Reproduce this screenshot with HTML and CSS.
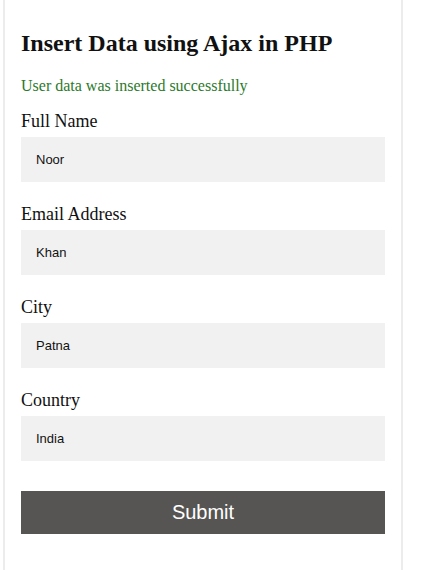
FILE: index.html
```html
<!DOCTYPE html>
<html lang="en">
<head>
<meta charset="utf-8">
<title>Insert Data using Ajax in PHP</title>
<link rel="stylesheet" href="styles.css">
</head>
<body>
<div class="container">
  <h2 class="title">Insert Data using Ajax in PHP</h2>
  <p class="msg">User data was inserted successfully</p>
  <form class="form">
    <label class="field">
      <span class="label">Full Name</span>
      <input class="input" type="text" value="Noor">
    </label>
    <label class="field">
      <span class="label">Email Address</span>
      <input class="input" type="text" value="Khan">
    </label>
    <label class="field">
      <span class="label">City</span>
      <input class="input" type="text" value="Patna">
    </label>
    <label class="field">
      <span class="label">Country</span>
      <input class="input" type="text" value="India">
    </label>
    <button class="submit" type="button">Submit</button>
  </form>
</div>
</body>
</html>
```

FILE: styles.css
```css
html, body {
  margin: 0;
  padding: 0;
  background: #fff;
}

body {
  font-family: "Liberation Serif", "Times New Roman", serif;
  color: #111;
}

.container {
  box-sizing: border-box;
  width: 400px;
  margin-left: 3px;
  min-height: 100vh;
  padding: 29px 16px 30px;
  border-left: 2px solid #ececec;
  border-right: 2px solid #ececec;
}

.title {
  margin: 0;
  font-size: 24px;
  line-height: 28px;
  font-weight: bold;
  color: #111;
}

.msg {
  margin: 19px 0 0;
  font-size: 16px;
  line-height: 20px;
  color: #2b7a2b;
}

.form {
  display: flex;
  flex-direction: column;
  margin-top: 14px;
}

.field {
  display: flex;
  flex-direction: column;
  gap: 5px;
}

.field + .field {
  margin-top: 21px;
}

.label {
  font-size: 18px;
  line-height: 22px;
  color: #111;
}

.input {
  box-sizing: border-box;
  width: 100%;
  height: 45px;
  margin: 0;
  padding: 0 15px;
  border: none;
  outline: none;
  background: #f1f1f1;
  font-family: "Liberation Sans", Arial, sans-serif;
  font-size: 13px;
  color: #111;
}

.submit {
  box-sizing: border-box;
  width: 100%;
  height: 43px;
  margin-top: 30px;
  padding: 0;
  border: none;
  background: #575553;
  color: #fff;
  font-family: "Liberation Sans", Arial, sans-serif;
  font-size: 20px;
  cursor: pointer;
}
```
